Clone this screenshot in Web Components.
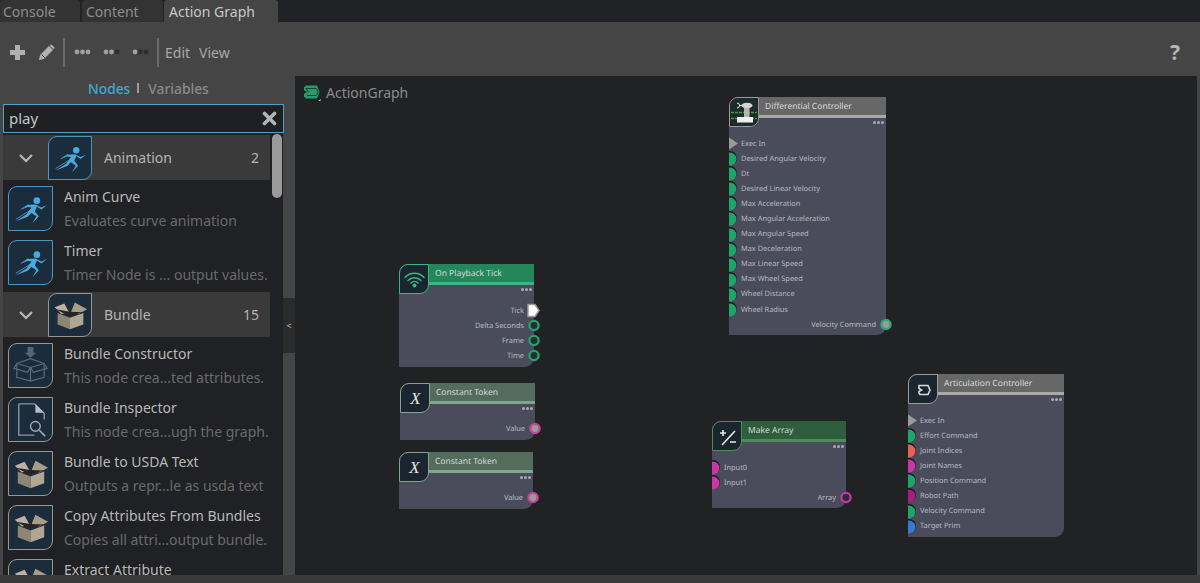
<!DOCTYPE html>
<html>
<head>
<meta charset="utf-8">
<title>Action Graph</title>
<style>
  html, body { margin: 0; height: 100%; background: #3b3b3b; overflow: hidden; }
  body { font-family: "Noto Sans", "Open Sans", sans-serif; }
</style>
</head>
<body>

<graph-app>
  <tab-bar slot="tabs"></tab-bar>
  <tool-bar slot="toolbar"></tool-bar>

  <node-panel slot="panel">
    <cat-row name="Animation" count="2" kind="run"></cat-row>
    <node-item name="Anim Curve" desc="Evaluates curve animation" kind="run"></node-item>
    <node-item name="Timer" desc="Timer Node is ... output values." kind="run"></node-item>
    <cat-row name="Bundle" count="15" kind="box" style="margin-top:3px"></cat-row>
    <node-item name="Bundle Constructor" desc="This node crea...ted attributes." kind="boxline"></node-item>
    <node-item name="Bundle Inspector" desc="This node crea...ugh the graph." kind="doc"></node-item>
    <node-item name="Bundle to USDA Text" desc="Outputs a repr...le as usda text" kind="box"></node-item>
    <node-item name="Copy Attributes From Bundles" desc="Copies all attri...output bundle." kind="box"></node-item>
    <node-item name="Extract Attribute" desc="" kind="box"></node-item>
  </node-panel>

  <graph-canvas slot="canvas">
    <graph-node style="left:434px;top:21px;width:157px;height:238px" name="Differential Controller" head="#666766" line="#a9a9a9" icon="robot" edge="#9a9a9a" ports-top="39">
      <node-port type="exec">Exec In</node-port>
      <node-port color="#1fa56b">Desired Angular Velocity</node-port>
      <node-port color="#1fa56b">Dt</node-port>
      <node-port color="#1fa56b">Desired Linear Velocity</node-port>
      <node-port color="#1fa56b">Max Acceleration</node-port>
      <node-port color="#1fa56b">Max Angular Acceleration</node-port>
      <node-port color="#1fa56b">Max Angular Speed</node-port>
      <node-port color="#1fa56b">Max Deceleration</node-port>
      <node-port color="#1fa56b">Max Linear Speed</node-port>
      <node-port color="#1fa56b">Max Wheel Speed</node-port>
      <node-port color="#1fa56b">Wheel Distance</node-port>
      <node-port color="#1fa56b">Wheel Radius</node-port>
      <node-port out ring="#2aa878" fill="#9a9a9a">Velocity Command</node-port>
    </graph-node>

    <graph-node style="left:104px;top:188px;width:135px;height:103px" name="On Playback Tick" head="#23875b" line="#3cb585" icon="wifi" edge="#3cb585" ports-top="39">
      <node-port out type="tick">Tick</node-port>
      <node-port out ring="#1fa56b" fill="#2a2c33">Delta Seconds</node-port>
      <node-port out ring="#1fa56b" fill="#2a2c33">Frame</node-port>
      <node-port out ring="#1fa56b" fill="#2a2c33">Time</node-port>
    </graph-node>

    <graph-node style="left:105px;top:307px;width:135px;height:57px" name="Constant Token" head="#536c5c" line="#7fa58e" icon="x" edge="#7fa58e" ports-top="38">
      <node-port out ring="#c0479b" fill="#9a9a9a">Value</node-port>
    </graph-node>

    <graph-node style="left:104px;top:376px;width:134px;height:57px" name="Constant Token" head="#536c5c" line="#7fa58e" icon="x" edge="#7fa58e" ports-top="38">
      <node-port out ring="#c0479b" fill="#9a9a9a">Value</node-port>
    </graph-node>

    <graph-node style="left:417px;top:345px;width:134px;height:87px" name="Make Array" head="#2f5e3c" line="#4f8c5c" icon="plusminus" edge="#4f8c5c" ports-top="39">
      <node-port color="#c936a5">Input0</node-port>
      <node-port color="#c936a5">Input1</node-port>
      <node-port out ring="#c936a5" fill="#2a2c33">Array</node-port>
    </graph-node>

    <graph-node style="left:613px;top:298px;width:156px;height:163px" name="Articulation Controller" head="#666766" line="#a9a9a9" icon="graph" edge="#9a9a9a" ports-top="39">
      <node-port type="exec">Exec In</node-port>
      <node-port color="#1fa56b">Effort Command</node-port>
      <node-port color="#e8625c">Joint Indices</node-port>
      <node-port color="#c936a5">Joint Names</node-port>
      <node-port color="#1fa56b">Position Command</node-port>
      <node-port color="#a81c7d">Robot Path</node-port>
      <node-port color="#1fa56b">Velocity Command</node-port>
      <node-port color="#3a78d8">Target Prim</node-port>
    </graph-node>
  </graph-canvas>
</graph-app>

<script>
// shared icon drawings, all on a 44x44 box
const RUNNER = `
  <circle cx="28.5" cy="14" r="3.400" fill="#4aa8dc"/>
  <path d="M27 18 L19 18.500 L13 23 L19 20.500 L23 21 L18 28 L7 35 L19 30.500 L23 26.500 L28 30 L24 37 L30.500 30 L26.500 25 L28.500 20 L33 23 L39 18.500 L33 21 Z" fill="#4aa8dc"/>
  <path d="M7 33 L23 23 M12 23 L20 18" stroke="#4aa8dc" stroke-width=".8"/>`;
const BOX = `
  <path d="M23 19 L27 9 L40 16 L31 21 Z" fill="#a89d8a"/>
  <path d="M21 19 L16 10 L6 14 L13 21 Z" fill="#bcb29f"/>
  <path d="M7 16 L21 23 L36 19 L22 18.500 Z" fill="#2a2420"/>
  <path d="M9 20 L22 25 L22 37 L9 32 Z" fill="#8f8574"/>
  <path d="M22 25 L36 20 L36 32 L22 37 Z" fill="#b0a694"/>`;
const ICONS = {
  run: RUNNER,
  box: BOX,
  boxline: `<g fill="none" stroke="#5c6b76" stroke-width="1.200">
    <path d="M8 20 L22 15 L36 20 L36 34 L22 38 L8 34 Z"/>
    <path d="M8 20 L22 24 L36 20 M22 24 L22 38 M8 20 L5 25 L19 29 L22 24 L25 29 L39 25 L36 20"/></g>
    <path d="M19 3 H25 V9 H28 L22 14 L16 9 H19 Z" fill="#55646e"/>`,
  doc: `<path d="M10 6 H26 L36 16 V22 M10 6 V38 H26" fill="none" stroke="#8f979c" stroke-width="1.400"/>
    <path d="M27 6 L36 15 H27 Z" fill="#b9bcbd"/>
    <circle cx="27" cy="29" r="5" fill="none" stroke="#a4aaad" stroke-width="1.400"/>
    <path d="M31 33 L37 39" stroke="#a4aaad" stroke-width="1.600"/>`
};

class GraphApp extends HTMLElement {
  constructor() {
    super();
    this.attachShadow({ mode: 'open' });
    this.shadowRoot.innerHTML = `
      <style>
        :host { display: grid; width: 1200px; height: 583px; grid-template-columns: 295px 1fr 3px; grid-template-rows: 22px 54px 499px 8px; background: #454545; font-family: "Noto Sans", "Open Sans", sans-serif; }
        .top { grid-column: 1 / 4; }
        .foot { grid-column: 1 / 4; background: #3a3a3a; }
      </style>
      <div class="top"><slot name="tabs"></slot></div>
      <div class="top"><slot name="toolbar"></slot></div>
      <slot name="panel"></slot>
      <slot name="canvas"></slot>
      <div></div>
      <div class="foot"></div>`;
  }
}

class TabBar extends HTMLElement {
  constructor() {
    super();
    this.attachShadow({ mode: 'open' });
    this.shadowRoot.innerHTML = `
      <style>
        :host { display: flex; height: 22px; background: #202226; gap: 2px; font-size: 14px; }
        div { height: 22px; line-height: 23px; background: #333; color: #8d8d8d; box-sizing: border-box; border-radius: 3px 3px 0 0; }
        .a { width: 80px; padding-left: 3px; }
        .b { width: 81px; padding-left: 4px; }
        .c { width: 114px; margin-left: -1px; padding-left: 5px; background: #454545; color: #c8c8c8; }
      </style>
      <div class="a">Console</div><div class="b">Content</div><div class="c">Action Graph</div>`;
  }
}

class ToolBar extends HTMLElement {
  constructor() {
    super();
    this.attachShadow({ mode: 'open' });
    this.shadowRoot.innerHTML = `
      <style>
        :host { display: flex; align-items: center; height: 54px; padding: 6px 20px 0 9px; box-sizing: border-box; background: #454545; color: #a8a8a8; font-size: 14px; }
        svg { display: block; flex: none; }
        .sep { width: 2px; height: 29px; background: #6a6a6a; flex: none; }
        .t { margin-left: 6px; }
        .help { margin-left: auto; font-size: 21px; font-weight: 700; color: #b5b5b5; }
      </style>
      <svg width="17" height="17" viewBox="0 0 17 17"><path d="M6 1 H11 V6 H16 V11 H11 V16 H6 V11 H1 V6 H6 Z" fill="#b0b0b0"/></svg>
      <svg style="margin-left:12px" width="17" height="17" viewBox="0 0 17 17"><path d="M1 16 L2 11 L11 2 L15 6 L6 15 Z" fill="#b0b0b0"/><path d="M12.500 1 L16 4.500" stroke="#b0b0b0" stroke-width="2"/><path d="M3.500 10.500 L7 14" stroke="#454545"/></svg>
      <div class="sep" style="margin-left:8px"></div>
      <svg style="margin-left:9px" width="17" height="6" viewBox="0 0 17 6"><g fill="#a0a0a0"><circle cx="3" cy="3" r="2.400"/><circle cx="8.500" cy="3" r="2.400"/><circle cx="14" cy="3" r="2.400"/></g></svg>
      <svg style="margin-left:12px" width="17" height="6" viewBox="0 0 17 6"><g fill="#a0a0a0"><circle cx="3" cy="3" r="2.400"/><circle cx="8.500" cy="3" r="2.400"/></g><circle cx="14" cy="3" r="2.400" fill="#2f2f2f"/></svg>
      <svg style="margin-left:12px" width="17" height="6" viewBox="0 0 17 6"><circle cx="3" cy="3" r="2.400" fill="#a0a0a0"/><g fill="#2f2f2f"><circle cx="8.500" cy="3" r="2.400"/><circle cx="14" cy="3" r="2.400"/></g></svg>
      <div class="sep" style="margin-left:8px"></div>
      <span class="t">Edit</span><span class="t" style="margin-left:9px">View</span>
      <span class="help">?</span>`;
  }
}

class NodePanel extends HTMLElement {
  constructor() {
    super();
    this.attachShadow({ mode: 'open' });
    this.shadowRoot.innerHTML = `
      <style>
        :host { display: flex; flex-direction: column; width: 295px; height: 499px; overflow: hidden; background: #454545; position: relative; }
        .tabs { height: 28px; display: flex; align-items: center; font-size: 13.8px; font-weight: 500; color: #8a8a8a; padding: 0 0 4px 88px; box-sizing: border-box; }
        .tabs b { font-weight: 500; color: #3fa9d5; }
        .tabs i { width: 2px; height: 10px; background: #9a9a9a; margin: 0 9px 0 7px; }
        .search { margin-left: 3px; width: 281px; height: 29px; box-sizing: border-box; border: 1.5px solid #4f9fc9; background: #1e2022; color: #c4c4c4; font-size: 15px; display: flex; align-items: center; justify-content: space-between; padding: 0 6px 1px 5px; }
        .body { display: flex; flex: 1; min-height: 0; }
        .list { position: relative; margin-left: 3px; width: 280px; height: 100%; padding-top: 2px; box-sizing: border-box; background: #202124; overflow: hidden; flex: none; }
        .thumb { position: absolute; left: 269px; top: 1px; width: 10px; height: 64px; border-radius: 5px; background: #9b9b9b; }
        .strip { flex: 1; }
        .collapse { height: 55px; margin-top: 165px; background: #2b2b2b; color: #c0c0c0; font-size: 9px; text-align: center; line-height: 55px; }
      </style>
      <div class="tabs"><b>Nodes</b><i></i><span>Variables</span></div>
      <div class="search"><span>play</span>
        <svg width="15" height="15" viewBox="0 0 15 15"><path d="M2.500 2.500 L12.500 12.500 M12.500 2.500 L2.500 12.500" stroke="#b5b5b5" stroke-width="3.600" stroke-linecap="round"/></svg>
      </div>
      <div class="body">
        <div class="list"><slot></slot><div class="thumb"></div></div>
        <div class="strip"><div class="collapse">&lt;</div></div>
      </div>`;
  }
}

class CatRow extends HTMLElement {
  constructor() {
    super();
    this.attachShadow({ mode: 'open' });
    const kind = this.getAttribute('kind');
    const edge = kind === 'run' ? '#4a97c4' : '#9c9688';
    this.shadowRoot.innerHTML = `
      <style>
        :host { display: flex; align-items: center; width: 267px; height: 45px; margin-bottom: 1px; background: #3a3a3a; color: #b4b4b4; font-size: 14px; box-sizing: border-box; }
        .chev { width: 45px; flex: none; display: flex; justify-content: center; }
        .ic { width: 44px; height: 44px; flex: none; box-sizing: border-box; border: 1px solid ${edge}; border-radius: 9px 0 9px 0; background: #1b2c3c; }
        .ic svg { display: block; width: 42px; height: 42px; }
        .n { margin-left: 12px; flex: 1; }
        .c { margin-right: 11px; }
      </style>
      <div class="chev"><svg width="16" height="10" viewBox="0 0 16 10"><path d="M2 2 L8 8 L14 2" fill="none" stroke="#b8b8b8" stroke-width="2.200"/></svg></div>
      <div class="ic"><svg viewBox="0 0 44 44">${ICONS[kind]}</svg></div>
      <span class="n">${this.getAttribute('name')}</span><span class="c">${this.getAttribute('count')}</span>`;
  }
}

class NodeItem extends HTMLElement {
  constructor() {
    super();
    this.attachShadow({ mode: 'open' });
    const kind = this.getAttribute('kind');
    const edge = kind === 'run' ? '#4a97c4' : '#9c9688';
    this.shadowRoot.innerHTML = `
      <style>
        :host { display: flex; height: 54px; padding-left: 5px; box-sizing: border-box; align-items: center; }
        .ic { width: 45px; height: 45px; flex: none; box-sizing: border-box; border: 1px solid ${edge}; border-radius: 9px 0 9px 0; background: #1b2c3c; }
        .ic svg { display: block; width: 43px; height: 43px; }
        .tx { margin-left: 11px; margin-top: 2px; white-space: nowrap; }
        .n { font-size: 14px; line-height: 18px; color: #b8b8b8; }
        .d { font-size: 14px; line-height: 18px; min-height: 18px; margin-top: 6px; color: #6a6a6a; }
      </style>
      <div class="ic"><svg viewBox="0 0 44 44">${ICONS[kind]}</svg></div>
      <div class="tx"><div class="n">${this.getAttribute('name')}</div><div class="d">${this.getAttribute('desc')}</div></div>`;
  }
}

class GraphCanvas extends HTMLElement {
  constructor() {
    super();
    this.attachShadow({ mode: 'open' });
    this.shadowRoot.innerHTML = `
      <style>
        :host { display: block; position: relative; height: 499px; background: #212224; overflow: hidden; }
        .label { display: flex; align-items: center; gap: 5px; padding: 7px 0 0 8px; color: #8b8b8b; font-size: 14px; }
        svg { display: block; }
      </style>
      <div class="label">
        <svg width="18" height="18" viewBox="0 0 18 18"><path d="M3 1.500 H14 L16.500 8 L14 14.500 H3 L1 12.500 V9.800 L4 8 L1 6.200 V3.500 Z" fill="#2a9a6c"/><path d="M3 4.500 H13.500 L15 8 L13.500 11.500 H4 M5.500 8 L3 4.500" fill="none" stroke="#16382c" stroke-width=".9"/><path d="M15.500 17 H17.500 V15 Z" fill="#ddd"/></svg>
        <span>ActionGraph</span>
      </div>
      <slot></slot>`;
  }
}

const NODE_ICONS = {
  wifi: c => `<g fill="none" stroke="${c}" stroke-width="1.500" stroke-linecap="round"><path d="M5 12.500 A13 13 0 0 1 24 12.500"/><path d="M8 15.500 A9 9 0 0 1 21 15.500"/><path d="M11 18 A5 5 0 0 1 18 18"/></g><circle cx="14.500" cy="20.500" r="2" fill="${c}"/>`,
  x: () => `<text x="14.500" y="20" text-anchor="middle" font-family="Liberation Serif, serif" font-style="italic" font-size="17" fill="#e4e4e4">X</text>`,
  plusminus: () => `<path d="M7 11 H13 M10 8 V14 M9 23 L22 9 M17 20 H23" stroke="#e8e8e8" stroke-width="1.600" fill="none"/>`,
  graph: () => `<path d="M10 10.500 H19 L21 15 L19 19.500 H11 L10 18 V16.500 L12.500 15 L10 13.500 Z" fill="none" stroke="#d8d8d8" stroke-width="1.600"/>`,
  robot: () => `<rect x="0" y="0" width="28" height="28" rx="7" fill="#1d2c2a"/>
    <path d="M1 14.500 H27 M1 20.500 H27" stroke="#4a9a45" stroke-width="1.500" stroke-dasharray="3 1"/>
    <path d="M7 5 A2.500 2.500 0 0 1 7 10 M9 7.500 H12" fill="none" stroke="#eee"/>
    <ellipse cx="17" cy="7.500" rx="5.500" ry="2.800" fill="#d4d4d4"/><rect x="14" y="10" width="5.500" height="9" fill="#b4b4b4"/>
    <rect x="7" y="19" width="16" height="5.500" fill="#eee"/>`
};

class GraphNode extends HTMLElement {
  constructor() {
    super();
    this.attachShadow({ mode: 'open' });
    const head = this.getAttribute('head');
    const line = this.getAttribute('line');
    const edge = this.getAttribute('edge');
    const icon = NODE_ICONS[this.getAttribute('icon')](line);
    this.shadowRoot.innerHTML = `
      <style>
        :host { display: block; position: absolute; background: #4a4c5b; border-radius: 9px 0 9px 0; color: #b8bac0; font-size: 7.4px; text-rendering: geometricPrecision; }
        .head { height: 18px; margin-left: 29px; background: ${head}; border-bottom: 3px solid ${line}; padding-left: 7px; font-size: 8.5px; line-height: 19.5px; color: #d8d8d8; white-space: nowrap; }
        .ic { position: absolute; left: 0; top: 0; width: 30px; height: 30px; box-sizing: border-box; background: #1a2530; border: 1px solid ${edge}; border-radius: 9px 0 9px 0; overflow: hidden; }
        .ic svg { display: block; width: 28px; height: 28px; }
        .dots { position: absolute; right: 2px; top: 23.5px; display: flex; gap: 1px; }
        .dots i { width: 3px; height: 3px; border-radius: 50%; background: #a8aab0; }
        .ports { position: absolute; left: 0; right: 0; top: ${this.getAttribute('ports-top')}px; }
      </style>
      <div class="head">${this.getAttribute('name')}</div>
      <div class="ic"><svg viewBox="0 0 28 28">${icon}</svg></div>
      <div class="dots"><i></i><i></i><i></i></div>
      <div class="ports"><slot></slot></div>`;
  }
}

class NodePort extends HTMLElement {
  constructor() {
    super();
    this.attachShadow({ mode: 'open' });
    const out = this.hasAttribute('out');
    const type = this.getAttribute('type');
    let pin = '';
    if (type === 'exec') {
      pin = `<svg class="pin in" width="9" height="15" viewBox="0 0 9 15"><path d="M0 1.500 L9 7.500 L0 13.500 Z" fill="#9a9a9a"/></svg>`;
    } else if (type === 'tick') {
      pin = `<svg class="pin outp" width="13" height="15" viewBox="0 0 13 15"><path d="M1 1.500 H8 L12 7.500 L8 13.500 H1 Z" fill="#fff" stroke="#9a9a9a" stroke-width="1.500"/></svg>`;
    } else if (out) {
      const ring = this.getAttribute('ring');
      const fill = this.getAttribute('fill');
      pin = `<svg class="pin outc" width="12" height="15" viewBox="0 0 12 15"><circle cx="6" cy="7.500" r="4.600" fill="${fill}" stroke="${ring}" stroke-width="2.300"/></svg>`;
    } else {
      pin = `<svg class="pin in" width="9" height="15" viewBox="0 0 9 15"><circle cx="1" cy="7" r="7" fill="#16181c"/><circle cx="1" cy="8" r="6.500" fill="${this.getAttribute('color')}"/></svg>`;
    }
    this.shadowRoot.innerHTML = `
      <style>
        :host { display: flex; height: 15.1px; align-items: center; position: relative; white-space: nowrap; ${out ? 'justify-content: flex-end; padding-right: 10px;' : 'padding-left: 12px;'} box-sizing: border-box; }
        .pin { position: absolute; display: block; top: 0; }
        .in { left: 0; }
        .outc { right: -6px; }
        .outp { right: -6px; }
      </style>
      <slot></slot>${pin}`;
  }
}

customElements.define('graph-app', GraphApp);
customElements.define('tab-bar', TabBar);
customElements.define('tool-bar', ToolBar);
customElements.define('node-panel', NodePanel);
customElements.define('cat-row', CatRow);
customElements.define('node-item', NodeItem);
customElements.define('graph-canvas', GraphCanvas);
customElements.define('graph-node', GraphNode);
customElements.define('node-port', NodePort);
</script>
</body>
</html>
